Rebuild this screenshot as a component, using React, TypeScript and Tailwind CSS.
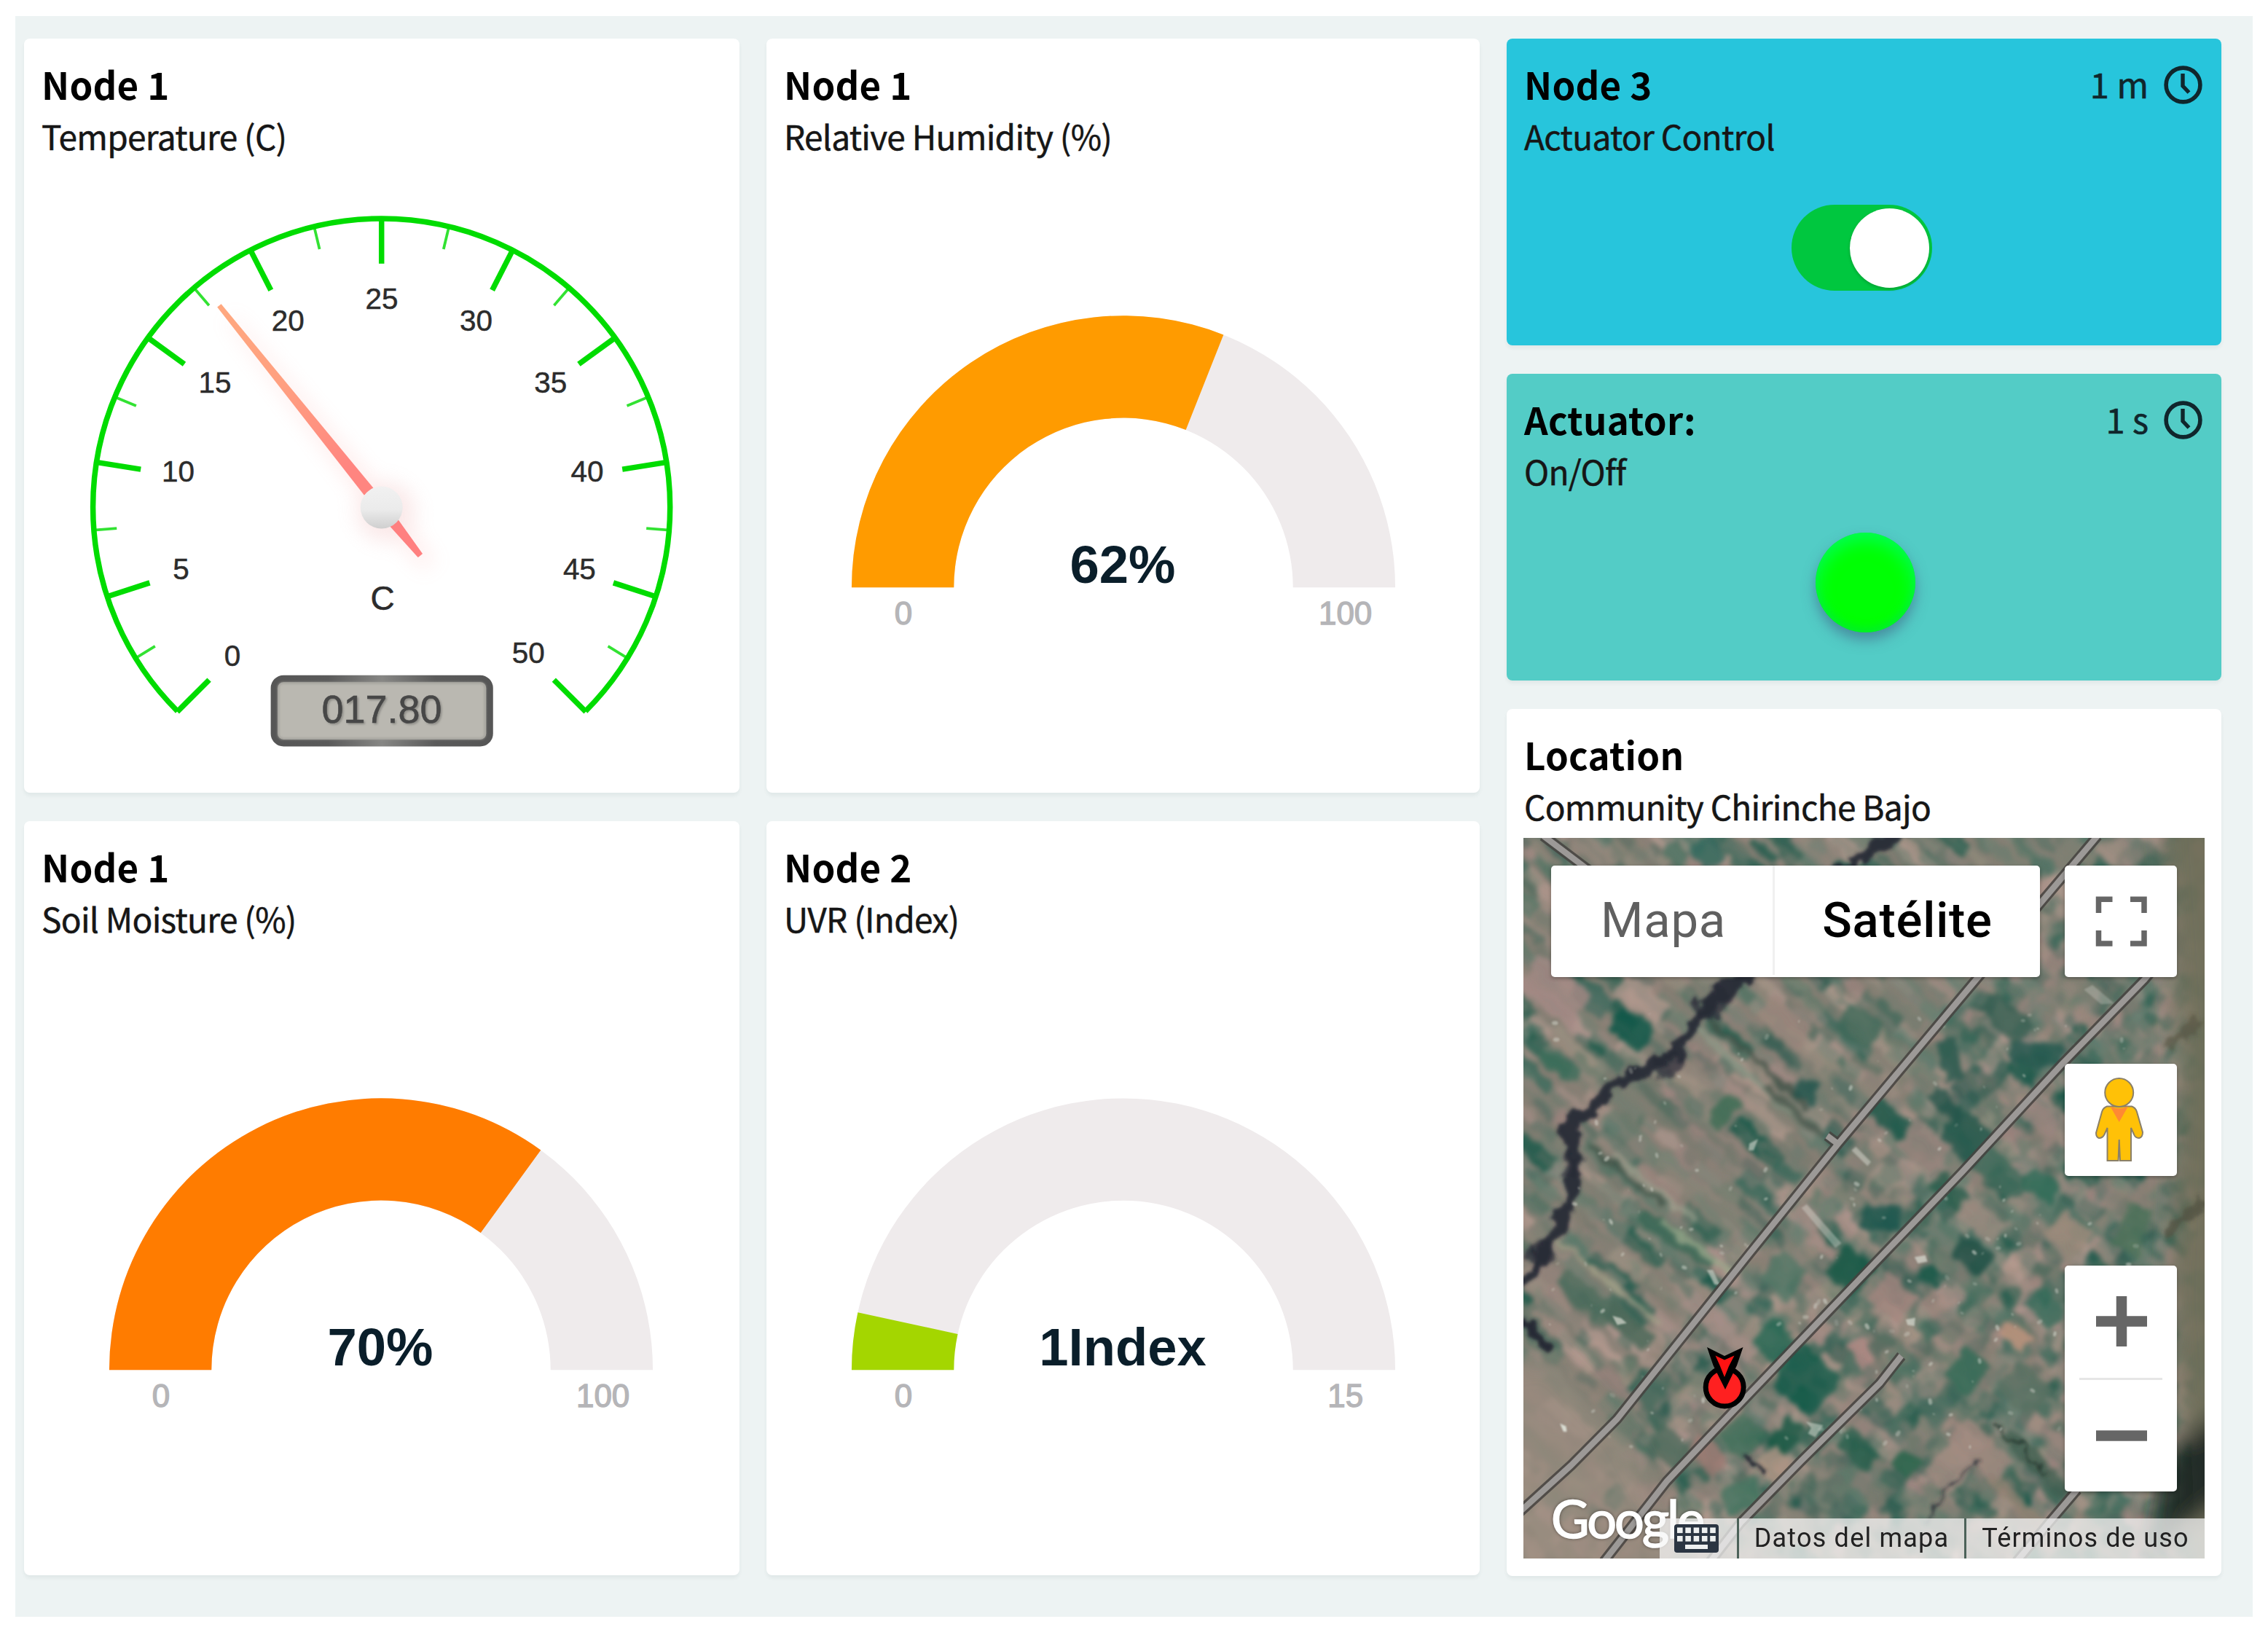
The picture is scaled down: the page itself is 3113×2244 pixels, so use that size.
import type { ReactNode } from "react";

const UI = "font-['Noto_Sans_CJK_SC','Noto_Sans',sans-serif]";

function Card({ title, subtitle, age, tone = "bg-white", className = "", children }: {
  title: string; subtitle: string; age?: string; tone?: string; className?: string; children: ReactNode;
}) {
  return (
    <section className={`flex flex-col overflow-hidden rounded-[8px] shadow-[0_4px_5px_rgba(40,60,60,0.06)] ${tone} ${className}`}>
      <header className={`flex shrink-0 justify-between pl-[24px] pr-[26px] pt-[26px] pb-[1px] ${UI}`}>
        <div className="whitespace-nowrap">
          <h2 className="text-[51px] leading-[72px] font-bold tracking-[0.2px] text-black">{title}</h2>
          <p className="text-[46px] leading-[70px] tracking-[-0.7px] text-[#161616] [-webkit-text-stroke:0.5px_#161616]">{subtitle}</p>
        </div>
        {age && (
          <div className="flex h-[72px] items-center gap-[21px] text-[#10262c]">
            <span className="text-[47px] leading-[72px] whitespace-nowrap [-webkit-text-stroke:0.6px_#10262c]">{age}</span>
            <svg width="53" height="53" viewBox="0 0 53 53" fill="none" stroke="currentColor" strokeWidth="5.6" className="mt-[3px]">
              <circle cx="26.5" cy="26.5" r="23.4" />
              <path d="M26 11v17l8.5 9" strokeWidth="5.4" />
            </svg>
          </div>
        )}
      </header>
      {children}
    </section>
  );
}

function polar(cx: number, cy: number, r: number, deg: number) {
  const a = (deg * Math.PI) / 180;
  return [cx - r * Math.cos(a), cy - r * Math.sin(a)];
}

function ring(from: number, to: number) {
  const cx = 490;
  const cy = 585;
  const [x1, y1] = polar(cx, cy, 373.5, from);
  const [x2, y2] = polar(cx, cy, 373.5, to);
  const [x3, y3] = polar(cx, cy, 233, to);
  const [x4, y4] = polar(cx, cy, 233, from);
  return `M${x1} ${y1}A373.5 373.5 0 0 1 ${x2} ${y2}L${x3} ${y3}A233 233 0 0 0 ${x4} ${y4}Z`;
}

function Donut({ fraction, color, label, max }: { fraction: number; color: string; label: string; max: string }) {
  return (
    <svg viewBox="0 0 981 867" className="h-[867px] w-[981px] font-['Liberation_Sans',sans-serif]">
      <path d={ring(0, 180)} fill="#efebec" />
      <path d={ring(0, 180 * fraction)} fill={color} />
      <text x="489" y="579" textAnchor="middle" fontSize="72.500" fontWeight="700" fill="#0a1e2a">{label}</text>
      <g fontSize="44" fill="#b5b5b8" stroke="#b5b5b8" strokeWidth="1.4" textAnchor="middle">
        <text x="187.500" y="635.500">0</text>
        <text x="795" y="635.500">{max}</text>
      </g>
    </svg>
  );
}

const DIAL_LABELS: [string, number, number][] = [
  ["0", 318.7, 900], ["5", 248.3, 781], ["10", 244.3, 647], ["15", 294.7, 525], ["20", 395, 440],
  ["25", 524, 409.4], ["30", 653.7, 440], ["35", 756, 525], ["40", 806.4, 647], ["45", 795.7, 781], ["50", 725.4, 896.5],
];

function Dial() {
  const ticks = Array.from({ length: 21 }, (_, i) => ({ major: i % 2 === 0, angle: -135 + i * 13.5 }));
  return (
    <svg viewBox="33 222 981 867" className="h-[867px] w-[981px] font-['Liberation_Sans',sans-serif]">
      <defs>
        <linearGradient id="needle" x1="0" y1="-355" x2="0" y2="0" gradientUnits="userSpaceOnUse">
          <stop offset="0" stopColor="#ffa87f" />
          <stop offset="0.4" stopColor="#ff9f80" />
          <stop offset="0.8" stopColor="#ff8580" />
        </linearGradient>
        <linearGradient id="hub" x1="0" y1="0" x2="0" y2="1">
          <stop offset="0" stopColor="#f1f1f1" />
          <stop offset="0.55" stopColor="#ebebeb" />
          <stop offset="1" stopColor="#cfcfcf" />
        </linearGradient>
        <linearGradient id="bezel" x1="0" y1="0" x2="1" y2="0">
          <stop offset="0" stopColor="#565656" />
          <stop offset="0.25" stopColor="#5a5a5a" />
          <stop offset="0.5" stopColor="#868684" />
          <stop offset="0.75" stopColor="#5a5a5a" />
          <stop offset="1" stopColor="#565656" />
        </linearGradient>
        <filter id="glow" x="-100%" y="-100%" width="300%" height="300%"><feGaussianBlur stdDeviation="14" /></filter>
        <filter id="soft" x="-10%" y="-10%" width="120%" height="120%"><feGaussianBlur stdDeviation="1.6" /></filter>
      </defs>
      <path d="M243.3 977A396.5 396.5 0 1 1 804 977" fill="none" stroke="#00dc00" strokeWidth="7.500" />
      <g stroke="#00dc00" strokeLinecap="butt">
        {ticks.map(({ major, angle }) => (
          <line key={angle} x1="523.7" x2="523.7" y1="300" y2={major ? 362 : 332} strokeWidth={major ? 7.5 : 3.8}
            transform={`rotate(${angle} 523.7 697)`} opacity={major ? 1 : 0.8} />
        ))}
      </g>
      <g fontSize="40.5" fill="#2c2c2c" stroke="#2c2c2c" strokeWidth="0.5" textAnchor="middle">
        {DIAL_LABELS.map(([t, x, y]) => <text key={t} x={x} y={y + 14.5}>{t}</text>)}
        <text x="525" y="838" fontSize="46">C</text>
      </g>
      <g transform="translate(523.7 697)">
        <g filter="url(#glow)" opacity="0.2" transform="translate(6 6) rotate(-38.8)">
          <path d="M-5 -340L5 -340L14 0L8 95L-8 95L-14 0Z" fill="#ff9a95" />
          <circle r="40" fill="#e88f8f" />
        </g>
        <g transform="rotate(-38.8)">
          <path d="M-3.5 -356L3.5 -356L8 -28L-8 -28Z" fill="url(#needle)" />
          <path d="M-7.5 25L7.5 25L4 85L-4 85Z" fill="#ff8080" />
        </g>
        <circle r="29" fill="url(#hub)" />
      </g>
      <rect x="376.2" y="932.2" width="296" height="88.5" rx="13" fill="#bab8b1" stroke="url(#bezel)" strokeWidth="9.5" />
      <rect x="382" y="938" width="284" height="77" rx="6" fill="none" stroke="#9b9a94" strokeWidth="2" filter="url(#soft)" />
      <text x="526" y="995" textAnchor="middle" fontSize="54" fill="#8a8984" filter="url(#soft)">017.80</text>
      <text x="524" y="993" textAnchor="middle" fontSize="54" fill="#474747" stroke="#474747" strokeWidth="0.6">017.80</text>
    </svg>
  );
}

/* Deterministic generator, so that the terrain is the same on every load. */
function seeded(seed: number) {
  let s = seed;
  return () => {
    s = (s + 0x6d2b79f5) | 0;
    let t = Math.imul(s ^ (s >>> 15), 1 | s);
    t = (t + Math.imul(t ^ (t >>> 7), 61 | t)) ^ t;
    return ((t ^ (t >>> 14)) >>> 0) / 4294967296;
  };
}

const GREENS = ["#3f6457", "#2d5b4d", "#567163", "#1c5446", "#62776a", "#4b6b5c", "#35594f", "#586a5e", "#667568"];
const EARTHS = [
  "#8f8076", "#857970", "#9a897f", "#7d766b", "#9b867f", "#8a8375", "#74766a", "#8a7972", "#6e7468", "#7b7a6e", "#a18d82", "#6a6f64",
];

type Patch = { x: number; y: number; w: number; h: number; r: number; fill: string; o: number };

function buildFields(seed: number, step: number, scale: number, opacity: number): Patch[] {
  const rnd = seeded(seed);
  const out: Patch[] = [];
  const rot = (41 * Math.PI) / 180;
  for (let v = -1200; v < 1300; v += step) {
    let u = -200;
    while (u < 2300) {
      const x0 = u * Math.cos(rot) + v * Math.sin(rot);
      const y0 = u * Math.sin(rot) - v * Math.cos(rot);
      const leftSide = y0 < 1390 - x0 * 1.1;
      const w = (leftSide ? 50 + rnd() * 110 : 32 + rnd() * 44) * scale;
      const h = leftSide ? step * (0.45 + rnd() * 0.5) : step * (0.85 + rnd() * 0.4);
      const vv = v + (rnd() - 0.5) * 16;
      const x = (u + w / 2) * Math.cos(rot) + vv * Math.sin(rot);
      const y = (u + w / 2) * Math.sin(rot) - vv * Math.cos(rot);
      u += w;
      if (x < -60 || x > 1630 || y < -60 || y > 1630) continue;
      const barren = y > 1130 + x * 0.8;
      const density = barren ? 0.05 : leftSide ? 0.38 : 0.46;
      const list = rnd() < density ? GREENS : EARTHS;
      out.push({
        x, y, w: w + 2, h: h + 3, r: 41 + (rnd() - 0.5) * 10,
        fill: list[Math.floor(rnd() * list.length)], o: opacity * (0.75 + rnd() * 0.25),
      });
    }
  }
  return out;
}

const FIELDS = [...buildFields(41, 44, 1, 1), ...buildFields(97, 25, 0.55, 0.42)];

const SPECKS = (() => {
  const rnd = seeded(7);
  return Array.from({ length: 190 }, () => ({
    x: 60 + rnd() * 1350, y: 380 + rnd() * 950, r: 1.5 + rnd() * 3.2, o: 0.15 + rnd() * 0.4,
  }));
})();

/* Large landmarks: centre x, centre y, length, width, rotation, colour. */
const LANDMARKS: [number, number, number, number, number, string][] = [
  [245, 415, 90, 60, 35, "#0f5144"], [155, 350, 90, 50, 35, "#46675b"], [80, 495, 100, 36, 30, "#3a6655"],
  [420, 30, 60, 60, 60, "#2e6156"], [600, 400, 120, 60, 38, "#8f7d73"], [270, 350, 120, 60, 35, "#9f8b81"],
  [70, 330, 150, 90, 35, "#947e79"], [350, 870, 200, 34, 33, "#33604f"], [400, 890, 200, 12, 33, "#8c9a80"],
  [230, 730, 220, 12, 38, "#3e4f44"], [300, 760, 240, 14, 38, "#8b9080"], [540, 490, 300, 14, 40, "#3d4d44"],
  [500, 500, 300, 13, 40, "#7f8b7b"], [620, 590, 160, 16, 40, "#48544a"], [190, 960, 330, 10, 38, "#93947d"],
  [840, 610, 100, 44, 42, "#1a5245"], [970, 580, 90, 36, 45, "#224f45"], [1020, 650, 110, 90, 40, "#235247"],
  [1100, 730, 110, 60, 40, "#3a6354"], [1190, 755, 80, 50, 30, "#2c6451"], [1180, 470, 120, 50, 5, "#23534a"],
  [980, 480, 50, 90, -15, "#245347"], [1110, 390, 120, 60, 40, "#33594c"], [770, 410, 90, 70, 30, "#3b6153"],
  [750, 940, 90, 80, 40, "#10503f"], [820, 825, 90, 50, 0, "#1c5149"], [1030, 905, 90, 60, 35, "#1e4b41"],
  [980, 770, 90, 50, 40, "#2a5949"], [850, 1000, 90, 80, 40, "#957c74"], [580, 1100, 90, 80, 40, "#23604d"],
  [650, 1180, 120, 110, 40, "#145545"], [600, 950, 80, 80, 40, "#4e6f5f"], [1020, 1160, 70, 90, 40, "#2f6350"],
  [1130, 1080, 70, 40, 30, "#b08a74"], [775, 1120, 60, 40, 60, "#a5807a"], [1200, 1020, 80, 60, 45, "#356555"],
  [1050, 1330, 150, 70, 42, "#937f75"], [980, 1370, 80, 90, 42, "#988379"], [770, 1330, 90, 60, 45, "#285a49"],
  [880, 1360, 50, 40, 40, "#1f5d44"], [600, 1300, 50, 80, 40, "#17513f"], [500, 1300, 80, 80, 45, "#3f6955"],
  [500, 1430, 90, 60, -20, "#3f6b59"], [580, 1370, 80, 60, 50, "#a08a7b"], [420, 1340, 90, 50, 45, "#8d7169"],
  [450, 1060, 200, 40, 40, "#93827a"], [1180, 1360, 200, 34, 44, "#3d5a4c"], [1130, 1440, 160, 30, 42, "#85796a"],
  [340, 1330, 100, 60, 40, "#4a6456"], [290, 1200, 60, 60, 40, "#4b665a"], [140, 1000, 150, 50, 40, "#4b6658"],
  [240, 1060, 120, 40, 40, "#456153"], [920, 670, 110, 80, 40, "#8d7d74"], [1050, 830, 110, 60, 40, "#8c8176"],
  [1400, 850, 60, 100, 20, "#496a54"], [1250, 860, 90, 70, 40, "#8d8071"], [1190, 610, 80, 50, 40, "#8c7c74"],
  [650, 545, 50, 50, 20, "#1f4f47"], [460, 590, 80, 40, -50, "#39654f"], [1150, 1200, 100, 90, 42, "#52695b"],
];

const ROADS = [
  "M1322 -5L1190 142L1045 305L725 665L520 905L215 1265L110 1365L-10 1468",
  "M1450 285L1430 308L1240 492L1010 727L480 1250L330 1400L185 1575",
  "M870 1127L820 1187L640 1355L500 1490L430 1575",
  "M1275 1418L1210 1490L1135 1575",
  "M45 -5L150 70",
  "M699 648L724 666",
];

function Terrain() {
  return (
    <svg viewBox="0 0 1568 1568" preserveAspectRatio="none" className="h-full w-full">
      <defs>
        <filter id="fieldBlur" x="0" y="0" width="100%" height="100%" colorInterpolationFilters="sRGB">
          <feTurbulence type="fractalNoise" baseFrequency="0.03" numOctaves="2" seed="4" result="n" />
          <feDisplacementMap in="SourceGraphic" in2="n" scale="28" xChannelSelector="R" yChannelSelector="G" />
          <feGaussianBlur stdDeviation="5" />
          <feComponentTransfer>
            <feFuncR type="linear" slope="1.14" intercept="-0.02" />
            <feFuncG type="linear" slope="1.13" intercept="-0.02" />
            <feFuncB type="linear" slope="1.14" intercept="-0.02" />
          </feComponentTransfer>
        </filter>
        <filter id="rough" x="-10%" y="-10%" width="120%" height="120%">
          <feTurbulence type="fractalNoise" baseFrequency="0.03" numOctaves="3" seed="9" result="n" />
          <feDisplacementMap in="SourceGraphic" in2="n" scale="44" xChannelSelector="R" yChannelSelector="G" />
          <feGaussianBlur stdDeviation="3.500" />
        </filter>
        <filter id="mist" x="-30%" y="-30%" width="160%" height="160%"><feGaussianBlur stdDeviation="26" /></filter>
        <filter id="pinprick"><feGaussianBlur stdDeviation="2" /></filter>
      </defs>
      <rect width="1568" height="1568" fill="#847e73" />
      <g filter="url(#fieldBlur)">
        {FIELDS.map((p, i) => (
          <rect key={i} x={-p.w / 2} y={-p.h / 2} width={p.w} height={p.h} fill={p.fill} opacity={p.o}
            transform={`translate(${p.x} ${p.y}) rotate(${p.r})`} />
        ))}
        {LANDMARKS.map(([x, y, w, h, r, fill], i) => (
          <rect key={`l${i}`} x={-w / 2} y={-h / 2} width={w} height={h} fill={fill} opacity="0.8"
            transform={`translate(${x + 2} ${y + 2}) rotate(${r})`} />
        ))}
      </g>
      <g filter="url(#mist)">
        <path d="M1475 -60L1640 -60L1640 1640L1540 1640L1495 1000L1515 500Z" fill="#706e59" opacity="0.9" />
        <path d="M-60 1150L60 1130L230 1300L420 1640L-60 1640Z" fill="#9b8d80" opacity="0.6" />
        <path d="M1480 1340L1640 1220L1640 1420L1440 1560Z" fill="#17251f" opacity="0.9" />
      </g>
      <g fill="none" stroke="#262a36" strokeLinejoin="round" filter="url(#rough)">
        <path d="M880 -20L800 30L720 80L500 310L440 345L392 405L355 470L285 502L205 540L155 595L98 622L118 700L108 800L65 870L25 940L-20 980" strokeWidth="30" opacity="0.95" />
        <path d="M470 335L400 390M360 480L300 500M118 690L108 740M60 890L20 930" strokeWidth="46" opacity="0.7" />
        <path d="M-10 1040L60 1110" strokeWidth="20" />
        <path d="M520 1350L560 1385" strokeWidth="10" />
        <path d="M1050 1350L960 1440L930 1490" strokeWidth="6" opacity="0.8" />
        <path d="M1090 1280L1200 1380" strokeWidth="7" stroke="#2f4238" />
        <path d="M1480 460L1560 390" strokeWidth="22" stroke="#55543f" opacity="0.6" />
        <path d="M1480 860L1570 790" strokeWidth="24" stroke="#4f5040" opacity="0.7" />
      </g>
      <g fill="#d9dcd2" filter="url(#pinprick)">
        {SPECKS.map((s, i) => (
          <ellipse key={i} cx={s.x} cy={s.y} rx={s.r * 1.6} ry={s.r} opacity={s.o} transform={`rotate(${i * 47} ${s.x} ${s.y})`} />
        ))}
        <path d="M640 805L652 797L732 882L718 892Z" opacity="0.4" />
        <path d="M755 680L765 672L800 705L792 714Z" opacity="0.5" />
        <path d="M650 1270L690 1278L672 1304L655 1296L662 1284Z" opacity="0.55" />
        <path d="M205 1040L225 1045L238 1056L216 1060Z" opacity="0.7" />
        <path d="M900 912L925 908L930 922L908 926Z" opacity="0.7" />
        <path d="M880 1048L902 1044L900 1062L884 1060Z" opacity="0.7" />
        <path d="M520 665L540 655L530 680L518 680Z" opacity="0.6" />
        <path d="M84 1274L98 1280L100 1292L92 1292Z" />
        <path d="M422 940L436 940L452 972L440 972Z" opacity="0.6" />
        <path d="M1290 330L1310 320L1360 360L1330 362Z" opacity="0.3" />
      </g>
      <g fill="none" strokeLinejoin="round">
        {ROADS.map((d) => <path key={d} d={d} stroke="#45423f" strokeWidth="24" opacity="0.85" />)}
        {ROADS.map((d) => <path key={d} d={d} stroke="#9c9997" strokeWidth="13.5" />)}
      </g>
    </svg>
  );
}

function Marker() {
  return (
    <svg width="62" height="88" viewBox="0 0 62 88" className="absolute top-[698px] left-[246px]">
      <circle cx="30.2" cy="56" r="26" fill="#ff2020" stroke="#000" strokeWidth="7" />
      <path d="M6 1L30 13L55.5 1L47 26L31 59L14.5 26Z" fill="#000" />
      <path d="M17.5 12.5L30 18.5L43.5 12.5L36 27L30 42L24 27Z" fill="#ff1212" />
    </svg>
  );
}

function Pegman() {
  return (
    <svg width="153" height="153" viewBox="0 0 153 153">
      <g fill="#ffc107" stroke="#8b8068" strokeWidth="2">
        <path d="M58 58.500H92Q97 60 99 66L107 94Q107 101 102 102Q97 102 95 97L91 88L91 133H76L74.700 104L73.500 133H58.500L58.500 88L54.500 97Q52 102 47 102Q43 101 43 95L51 66Q53 60 58 58.500Z" />
        <circle cx="74.700" cy="39.500" r="19.500" />
      </g>
      <path d="M62.500 58.500Q74.700 64 87 58.500L74.700 80Z" fill="#ff8a33" />
    </svg>
  );
}

function KeyboardIcon() {
  const keys = [0, 1, 2, 3, 4];
  return (
    <svg width="61" height="39" viewBox="0 0 61 39">
      <rect width="61" height="39" rx="4" fill="#2b3542" />
      <g fill="#eef0f0">
        {keys.map((k) => <rect key={k} x={4 + k * 11.3} y="4.500" width="7.600" height="7.600" />)}
        {keys.map((k) => <rect key={k} x={4 + k * 11.3} y="16" width="7.600" height="7.600" />)}
        <rect x="15" y="28" width="31" height="6" />
      </g>
    </svg>
  );
}

const CONTROL = "absolute rounded-[5px] bg-white shadow-[0_2px_5px_rgba(0,0,0,0.3)]";

function SatelliteMap() {
  return (
    <div className="relative ml-[23px] mt-[8px] h-[989px] w-[935px] shrink-0 overflow-hidden font-['Roboto',sans-serif]">
      <Terrain />
      <Marker />
      <div className={`${CONTROL} top-[38px] left-[38px] flex h-[153px] w-[671px] pb-[3px] whitespace-nowrap`}>
        <div className="flex w-[307px] items-center justify-center border-r-[3px] border-[#f0f0f0] text-[67px] text-[#606060]">
          <span className="pl-[4px] tracking-[0.8px]">Mapa</span>
        </div>
        <div className="flex flex-1 items-center justify-center text-[67px] font-medium tracking-[0.8px] text-black">Satélite</div>
      </div>
      <div className={`${CONTROL} top-[38px] left-[743px] h-[153px] w-[154px]`}>
        <svg viewBox="0 0 154 153" fill="none" stroke="#666" strokeWidth="7.5">
          <path d="M46.500 65V46.200H65.500M90 46.200H109V65M46.500 89V107H65.500M90 107H109V89" />
        </svg>
      </div>
      <div className={`${CONTROL} top-[310px] left-[743px] h-[154px] w-[154px]`}><Pegman /></div>
      <div className={`${CONTROL} top-[587px] left-[743px] flex h-[310px] w-[154px] flex-col items-center`}>
        <svg width="154" height="154" viewBox="0 0 154 154" stroke="#666" strokeWidth="14.500">
          <path d="M43 76.500H113M78 42V111" />
        </svg>
        <div className="h-[3px] w-[114px] bg-[#e6e6e6]" />
        <svg width="154" height="153" viewBox="0 0 154 153" stroke="#666" strokeWidth="14.500">
          <path d="M43 76.500H113" />
        </svg>
      </div>
      <div className="absolute bottom-[13px] left-[38px] font-['Lato',sans-serif] text-[72px] leading-[86px] tracking-[-3px] text-white [-webkit-text-stroke:1.6px_white] [text-shadow:0_0_5px_rgba(0,0,0,0.65)]">
        Google
      </div>
      <div className="absolute right-0 bottom-0 flex h-[55px] w-[748px] items-center bg-[#f5f5f5]/75 text-[36px] leading-[55px] whitespace-nowrap text-[#222]">
        <div className="flex w-[106px] justify-center pr-[5px]"><KeyboardIcon /></div>
        <div className="flex w-[315px] justify-center border-x-[3px] border-[#4c6259] tracking-[1.2px]">Datos del mapa</div>
        <div className="flex flex-1 justify-center tracking-[1.2px]">Términos de uso</div>
      </div>
    </div>
  );
}

export default function App() {
  return (
    <main className="h-[2244px] w-[3113px] overflow-hidden bg-white pt-[22px] pl-[21px]">
      <div className="flex h-[2197px] w-[3071px] gap-[37px] bg-[#edf3f3] pt-[31px] pl-[12px]">
        <div className="flex w-[982px] flex-col gap-[39px]">
          <Card title="Node 1" subtitle="Temperature (C)" className="h-[1035px]"><Dial /></Card>
          <Card title="Node 1" subtitle="Soil Moisture (%)" className="h-[1035px]">
            <Donut fraction={0.7} color="#ff7c00" label="70%" max="100" />
          </Card>
        </div>
        <div className="flex w-[979px] flex-col gap-[39px]">
          <Card title="Node 1" subtitle="Relative Humidity (%)" className="h-[1035px]">
            <Donut fraction={0.62} color="#ff9b00" label="62%" max="100" />
          </Card>
          <Card title="Node 2" subtitle="UVR (Index)" className="h-[1035px]">
            <Donut fraction={0.068} color="#a4d600" label="1Index" max="15" />
          </Card>
        </div>
        <div className="flex w-[981px] flex-col gap-[39px]">
          <Card title="Node 3" subtitle="Actuator Control" age="1 m" tone="bg-[#27c5dc]" className="h-[421px]">
            <div className="mt-[59px] ml-[391px] flex h-[118px] w-[193px] items-center justify-end rounded-full bg-[#00c73f] pr-[4px]">
              <div className="h-[109px] w-[109px] rounded-full bg-white shadow-[0_2px_4px_rgba(0,0,0,0.2)]" />
            </div>
          </Card>
          <Card title="Actuator:" subtitle="On/Off" age="1 s" tone="bg-[#53ccc6]" className="h-[421px]">
            <div className="mt-[49px] ml-[424px] h-[137px] w-[137px] rounded-full bg-[#00ff04] shadow-[0_10px_18px_rgba(60,80,120,0.5),inset_0_10px_24px_rgba(0,255,170,0.5),inset_0_-6px_12px_rgba(0,210,60,0.4)]" />
          </Card>
          <Card title="Location" subtitle="Community Chirinche Bajo" className="h-[1190px]"><SatelliteMap /></Card>
        </div>
      </div>
    </main>
  );
}
